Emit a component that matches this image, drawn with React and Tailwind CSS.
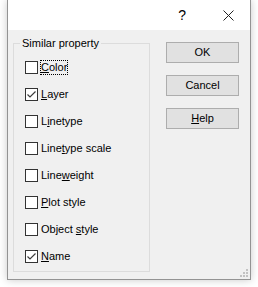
import React from "react";

const rows = [
  { pre: "", key: "C", post: "olor", checked: false, focus: true },
  { pre: "", key: "L", post: "ayer", checked: true },
  { pre: "L", key: "i", post: "netype" },
  { pre: "Line", key: "t", post: "ype scale" },
  { pre: "Line", key: "w", post: "eight" },
  { pre: "", key: "P", post: "lot style" },
  { pre: "Object ", key: "s", post: "tyle" },
  { pre: "", key: "N", post: "ame", checked: true },
];

function CheckRow({ row }) {
  return (
    <div className="flex h-[27px] items-center">
      <span className="flex h-[13px] w-[13px] items-center justify-center border border-[#333333] bg-white">
        {row.checked && (
          <svg width="11" height="11" viewBox="0 0 11 11">
            <path d="M1.5 5.5 L4 8 L9.5 2.5" fill="none" stroke="#3c3c3c" strokeWidth="1.2" />
          </svg>
        )}
      </span>
      <span
        className={
          "ml-[2px] border leading-[13px] " +
          (row.focus ? "border-dotted border-black" : "border-transparent")
        }
      >
        {row.pre}
        <u>{row.key}</u>
        {row.post}
      </span>
    </div>
  );
}

export default function App() {
  return (
    <div className="min-h-screen bg-white pl-[7px] font-['Liberation_Sans',Arial,sans-serif] text-[11px] text-black">
      <div className="relative flex h-[280px] w-[244px] flex-col border-x border-b border-[#939393] shadow-[0_0_8px_rgba(0,0,0,0.22)]">
        {/* title bar */}
        <div className="flex h-[30px] items-center justify-end gap-[37px] bg-white pr-[16px]">
          <span className="text-[14px] leading-none">?</span>
          <svg width="11" height="11" viewBox="0 0 11 11">
            <path d="M0.5 0.5 L10.5 10.5 M10.5 0.5 L0.5 10.5" stroke="#222" strokeWidth="1" />
          </svg>
        </div>

        {/* body */}
        <div className="flex flex-1 bg-[#f0f0f0]">
          <fieldset className="ml-[5px] mt-[6px] h-fit w-[137px] border border-[#dcdcdc] pb-[1px]">
            <legend className="ml-[6px] px-[2px] leading-[14px]">Similar property</legend>
            <div className="pl-[11px] pt-[4px]">
              {rows.map((r, i) => (
                <CheckRow key={i} row={r} />
              ))}
            </div>
          </fieldset>

          <div className="ml-[16px] mt-[12px] flex flex-col gap-[12px]">
            <button className="h-[21px] w-[73px] border border-[#adadad] bg-[#e1e1e1]">OK</button>
            <button className="h-[21px] w-[73px] border border-[#adadad] bg-[#e1e1e1]">Cancel</button>
            <button className="h-[21px] w-[73px] border border-[#adadad] bg-[#e1e1e1]">
              <u>H</u>elp
            </button>
          </div>
        </div>

        {/* size grip */}
        <svg className="absolute bottom-[2px] right-[2px]" width="8" height="8" viewBox="0 0 8 8">
          <rect x="6" y="0" width="2" height="2" fill="#c2c2c2" />
          <rect x="3" y="3" width="2" height="2" fill="#c2c2c2" />
          <rect x="6" y="3" width="2" height="2" fill="#c2c2c2" />
          <rect x="0" y="6" width="2" height="2" fill="#c2c2c2" />
          <rect x="3" y="6" width="2" height="2" fill="#c2c2c2" />
          <rect x="6" y="6" width="2" height="2" fill="#c2c2c2" />
        </svg>
      </div>
    </div>
  );
}
